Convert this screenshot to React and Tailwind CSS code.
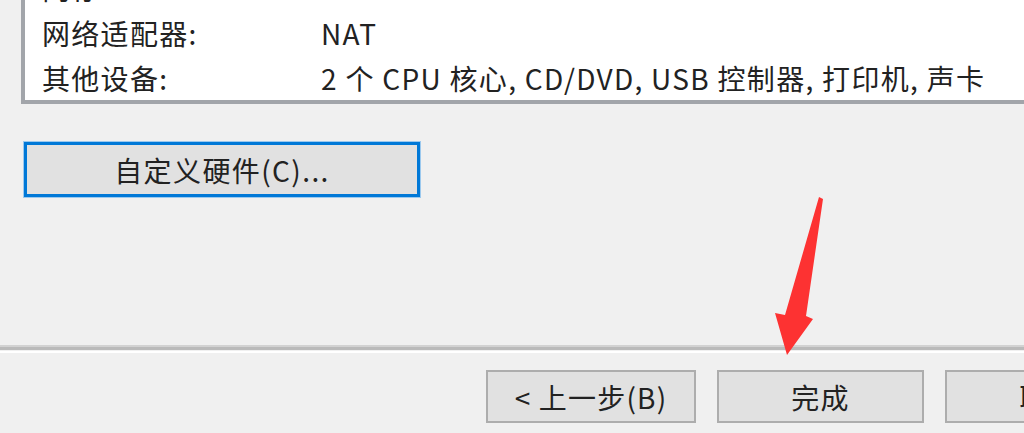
import React from "react";

const rows = [
    { label: "内存:", value: "4 GB" },
    { label: "网络适配器:", value: "NAT" },
    { label: "其他设备:", value: "2 个 CPU 核心, CD/DVD, USB 控制器, 打印机, 声卡" },
];

function WizardButton({ children, width }) {
    return (
        <div
            className={`${width} h-[53px] shrink-0 flex items-center justify-center bg-[#e1e1e1] border-2 border-[#adadad] text-[28px] tracking-[1.2px] text-[#222]`}
        >
            {children}
        </div>
    );
}

export default function App() {
    return (
        <div
            className="relative w-[1024px] h-[433px] overflow-hidden bg-[#f0f0f0] text-[#222]"
            style={{ fontFamily: '"Noto Sans CJK SC", "Noto Sans", sans-serif' }}
        >
            {/* summary list, top is scrolled out of view */}
            <div className="h-[104px] overflow-hidden flex flex-col justify-end pl-[21px]">
                <div className="w-[1100px] shrink-0 bg-white border-l-4 border-b-4 border-[#a2a5aa]">
                    {rows.map((row) => (
                        <div key={row.label} className="h-[45px] flex items-center text-[28px] leading-none tracking-[1.3px]">
                            <span className="w-[296px] pl-[17px] shrink-0">{row.label}</span>
                            <span>{row.value}</span>
                        </div>
                    ))}
                </div>
            </div>

            {/* customize hardware */}
            <div className="mt-[37px] ml-[23px] w-[398px] h-[57px] p-px bg-[#9cc9ee]">
                <div className="w-full h-full flex items-center justify-center bg-[#e1e1e1] border-[3px] border-[#0078d7] text-[28px] tracking-[1.4px]">
                    自定义硬件(C)...
                </div>
            </div>

            {/* separator */}
            <div className="mt-[147px]">
                <div className="h-[2px] bg-[#d2d2d2]" />
                <div className="h-[3px] bg-[#bababa]" />
                <div className="h-[1px]" />
                <div className="h-[2px] bg-white" />
            </div>

            {/* footer buttons */}
            <div className="mt-[17px] ml-[486px] flex gap-[21px]">
                <WizardButton width="w-[210px]">&lt; 上一步(B)</WizardButton>
                <WizardButton width="w-[207px]">完成</WizardButton>
                <WizardButton width="w-[207px]">取消</WizardButton>
            </div>

            {/* red annotation arrow */}
            <svg className="absolute left-0 top-0 pointer-events-none" width="1024" height="433">
                <polygon
                    points="819,197 823,199 806,316 813,319 787,355 775,313 785,315"
                    fill="#fd3232"
                />
            </svg>
        </div>
    );
}
